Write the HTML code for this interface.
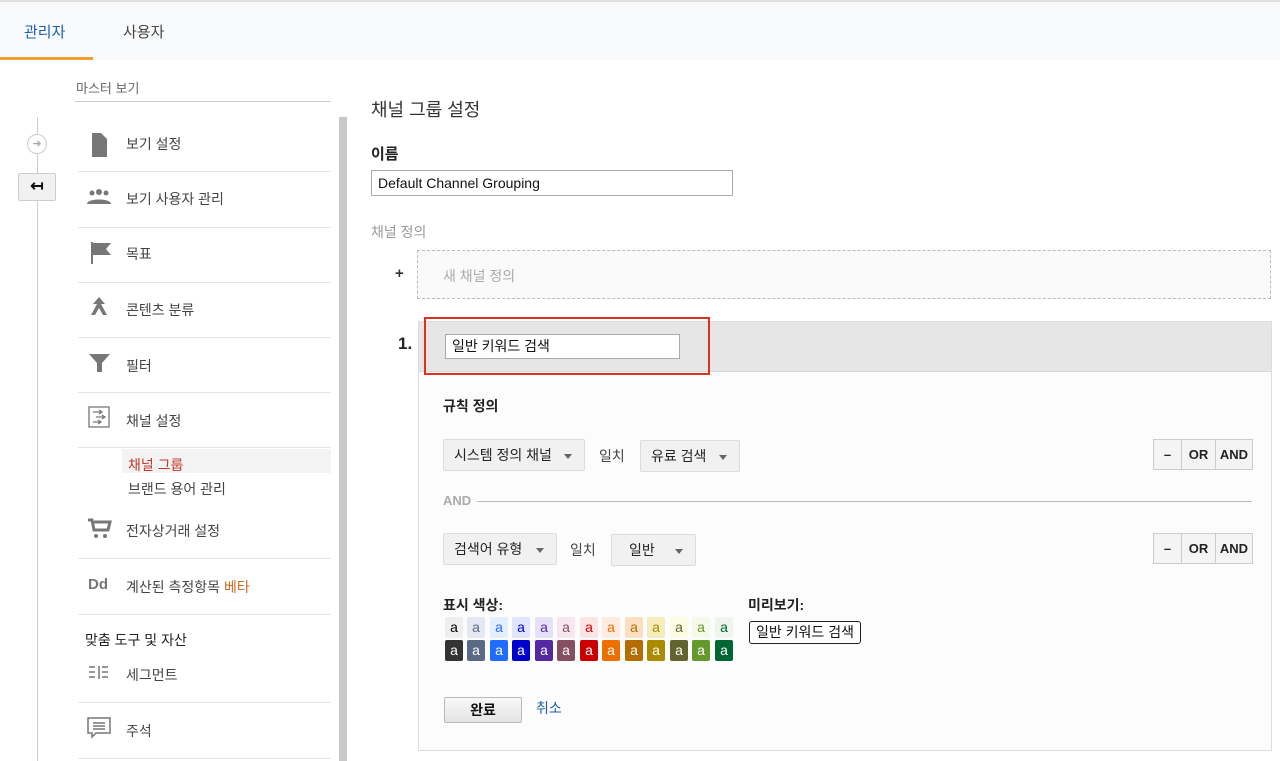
<!DOCTYPE html>
<html><head><meta charset="utf-8"><style>
*{margin:0;padding:0;box-sizing:border-box}
body{width:1280px;height:761px;overflow:hidden;background:#fff;font-family:"Liberation Sans","Noto Sans CJK KR",sans-serif;color:#333;position:relative}
.a{position:absolute;white-space:nowrap}
.t{font-size:14px;color:#444}
.sep{position:absolute;left:78px;width:253px;height:1px;background:#e4e4e4}
.dd{position:absolute;height:32px;background:#f1f1f1;border:1px solid #dcdcdc;border-radius:2px;font-size:14px;color:#222;padding:0 0 0 10px;line-height:30px}
.dd:after{content:"";position:absolute;right:12px;top:14px;border:4px solid transparent;border-top:5px solid #666}
.btns{position:absolute;height:31px;display:flex;border:1px solid #ccc;background:#f4f4f4;font-size:13px;font-weight:bold;color:#222}
.btns div{border-left:1px solid #ccc;text-align:center;line-height:29px}
.btns div:first-child{border-left:none}
.sw{position:absolute;width:18px;height:21px;font-size:14px;text-align:center;line-height:20px;border-radius:2px}
</style></head><body>
<div class="a" style="left:0;top:0;width:1280px;height:60px;background:#f8f9fa;border-top:2px solid #e0e0e0"></div>
<div class="a" style="left:24px;top:21px;font-size:15px;color:#1a5ea8">관리자</div>
<div class="a" style="left:123px;top:21px;font-size:15px;color:#444">사용자</div>
<div class="a" style="left:0;top:57px;width:93px;height:3px;background:#f0a030"></div>

<div class="a" style="left:76px;top:78px;font-size:13px;color:#666">마스터 보기</div>
<div class="a" style="left:75px;top:101px;width:256px;height:1px;background:#ccc"></div>
<div class="a" style="left:37px;top:117px;width:1px;height:644px;background:#ccc"></div>
<div class="a" style="left:27px;top:134px;width:20px;height:20px;border-radius:50%;border:1px solid #ccc;background:#fff;color:#aaa;font-size:11px;text-align:center;line-height:18px">➜</div>
<div class="a" style="left:18px;top:173px;width:38px;height:28px;border:1px solid #ccc;background:#f1f1f1;border-radius:2px;font-size:16px;font-weight:bold;text-align:center;line-height:26px;color:#111">↤</div>
<div class="a" style="left:339px;top:117px;width:8px;height:644px;background:#c8c8c8"></div>

<svg class="a" style="left:84px;top:128px" width="30" height="620" viewBox="0 0 30 620" fill="#777">
<path d="M8 5h9l6 6v18H8z"/>
<g transform="translate(0,55)"><circle cx="8" cy="10" r="2.5"/><circle cx="15" cy="9" r="3"/><circle cx="22" cy="10" r="2.5"/><path d="M3 21c0-6 24-6 24 0z"/></g>
<g transform="translate(0,110)"><path d="M7 4h2v22H7zM9 5h18l-5 6 5 6H9z"/></g>
<g transform="translate(0,165)"><path d="M15 4l-6 7h4l-6 11h4l4-7 4 7h4l-6-11h4z"/></g>
<g transform="translate(0,220)"><path d="M5 6h21l-8 9v9h-5v-9z"/></g>
<g transform="translate(0,275)" fill="none" stroke="#777" stroke-width="1.3"><rect x="5" y="4" width="20" height="20"/><path d="M9 9h9M15 7l3 2-3 2M12 14h9M18 12l3 2-3 2M9 19h8M14 17l3 2-3 2"/></g>
<g transform="translate(0,385)"><path d="M4 7h4l2 10h14l2-8H10" fill="none" stroke="#777" stroke-width="3"/><circle cx="12" cy="23" r="2"/><circle cx="21" cy="23" r="2"/></g>
<g transform="translate(0,530)" stroke="#777" stroke-width="1.5"><path d="M5 9h6M5 14h6M5 19h6M15 8v13M18 9h6M18 14h6M18 19h6"/></g>
<g transform="translate(0,585)" fill="none" stroke="#777" stroke-width="1.5"><path d="M4 5h22v15H12l-4 4v-4H4z"/><path d="M9 10h12M9 13h12M9 16h12"/></g>
</svg>
<div class="a" style="left:88px;top:576px;font-size:15px;font-weight:bold;color:#777">Dd</div>

<div class="a t" style="left:126px;top:134px">보기 설정</div>
<div class="sep" style="top:171px"></div>
<div class="a t" style="left:126px;top:189px">보기 사용자 관리</div>
<div class="sep" style="top:227px"></div>
<div class="a t" style="left:126px;top:244px">목표</div>
<div class="sep" style="top:282px"></div>
<div class="a t" style="left:126px;top:300px">콘텐츠 분류</div>
<div class="sep" style="top:337px"></div>
<div class="a t" style="left:126px;top:356px">필터</div>
<div class="sep" style="top:392px"></div>
<div class="a t" style="left:126px;top:411px">채널 설정</div>
<div class="sep" style="top:447px"></div>
<div class="a" style="left:122px;top:449px;width:209px;height:24px;background:#f3f3f3"></div>
<div class="a" style="left:128px;top:455px;font-size:14px;color:#c0392b">채널 그룹</div>
<div class="a t" style="left:128px;top:479px">브랜드 용어 관리</div>
<div class="a t" style="left:126px;top:521px">전자상거래 설정</div>
<div class="sep" style="top:558px"></div>
<div class="a t" style="left:126px;top:577px">계산된 측정항목 <span style="color:#d2691e">베타</span></div>
<div class="sep" style="top:614px"></div>
<div class="a" style="left:85px;top:630px;font-size:14px;color:#222">맞춤 도구 및 자산</div>
<div class="a t" style="left:126px;top:665px">세그먼트</div>
<div class="sep" style="top:702px"></div>
<div class="a t" style="left:126px;top:721px">주석</div>
<div class="sep" style="top:758px"></div>

<div class="a" style="left:371px;top:96px;font-size:18px;color:#333">채널 그룹 설정</div>
<div class="a" style="left:371px;top:143px;font-size:15px;font-weight:bold;color:#222">이름</div>
<div class="a" style="left:371px;top:170px;width:362px;height:26px;border:1px solid #aaa;font-size:14px;line-height:24px;padding-left:6px;color:#111">Default Channel Grouping</div>
<div class="a" style="left:371px;top:222px;font-size:14px;color:#999">채널 정의</div>
<div class="a" style="left:395px;top:265px;font-size:15px;font-weight:bold;color:#333">+</div>
<div class="a" style="left:417px;top:250px;width:854px;height:49px;border:1px dashed #bbb;background:#fafafa"></div>
<div class="a" style="left:443px;top:266px;font-size:14px;color:#aaa">새 채널 정의</div>

<div class="a" style="left:398px;top:334px;font-size:17px;font-weight:bold;color:#222">1.</div>
<div class="a" style="left:418px;top:321px;width:854px;height:430px;border:1px solid #ddd;background:#fcfcfc"></div>
<div class="a" style="left:419px;top:322px;width:852px;height:50px;background:#e6e6e6;border-bottom:1px solid #d8d8d8"></div>
<div class="a" style="left:424px;top:317px;width:286px;height:58px;border:2px solid #e03020"></div>
<div class="a" style="left:445px;top:334px;width:235px;height:25px;border:1px solid #aaa;background:#fff;font-size:14px;line-height:23px;padding-left:6px;color:#111">일반 키워드 검색</div>

<div class="a" style="left:443px;top:396px;font-size:14px;font-weight:bold;color:#222">규칙 정의</div>
<div class="dd" style="left:443px;top:439px;width:142px">시스템 정의 채널</div>
<div class="a t" style="left:599px;top:446px">일치</div>
<div class="dd" style="left:640px;top:440px;width:100px">유료 검색</div>
<div class="btns" style="left:1153px;top:439px;width:100px"><div style="width:27px">–</div><div style="width:34px">OR</div><div style="flex:1">AND</div></div>

<div class="a" style="left:443px;top:493px;font-size:13px;font-weight:bold;color:#aaa">AND</div>
<div class="a" style="left:477px;top:501px;width:775px;height:1px;background:#bbb"></div>

<div class="dd" style="left:443px;top:533px;width:114px">검색어 유형</div>
<div class="a t" style="left:570px;top:540px">일치</div>
<div class="dd" style="left:611px;top:534px;width:85px;padding-left:17px">일반</div>
<div class="btns" style="left:1153px;top:533px;width:100px"><div style="width:27px">–</div><div style="width:34px">OR</div><div style="flex:1">AND</div></div>

<div class="a" style="left:443px;top:595px;font-size:14px;font-weight:bold;color:#222">표시 색상:</div>
<div class="a" style="left:748px;top:595px;font-size:14px;font-weight:bold;color:#222">미리보기:</div>
<div class="a" style="left:749px;top:621px;width:112px;height:23px;border:1.5px solid #222;border-radius:3px;font-size:14px;line-height:20px;text-align:center;color:#111;background:#fff">일반 키워드 검색</div>
<div id="sw"></div>

<div class="a" style="left:444px;top:697px;width:78px;height:26px;border:1px solid #bbb;border-radius:2px;background:linear-gradient(#f8f8f8,#e4e4e4);font-size:14px;font-weight:bold;text-align:center;line-height:24px;color:#111">완료</div>
<div class="a" style="left:536px;top:698px;font-size:14px;color:#1a5ea8">취소</div>

<div class="sw" style="left:445px;top:617px;background:#eeeeee;color:#000">a</div><div class="sw" style="left:467px;top:617px;background:#e3e8f2;color:#5a6986">a</div><div class="sw" style="left:490px;top:617px;background:#e3efff;color:#206cff">a</div><div class="sw" style="left:512px;top:617px;background:#e0e4ff;color:#0000cc">a</div><div class="sw" style="left:535px;top:617px;background:#e6e0f8;color:#5229a3">a</div><div class="sw" style="left:557px;top:617px;background:#f8e6ef;color:#854f61">a</div><div class="sw" style="left:580px;top:617px;background:#fce4e4;color:#cc0000">a</div><div class="sw" style="left:602px;top:617px;background:#fdebe0;color:#ec7000">a</div><div class="sw" style="left:625px;top:617px;background:#fae0c0;color:#b36d00">a</div><div class="sw" style="left:647px;top:617px;background:#f5ecbc;color:#ab8b00">a</div><div class="sw" style="left:670px;top:617px;background:#fcfde0;color:#636330">a</div><div class="sw" style="left:692px;top:617px;background:#f5f9e8;color:#64992c">a</div><div class="sw" style="left:715px;top:617px;background:#eef5ec;color:#006633">a</div>
<div class="sw" style="left:445px;top:640px;background:#333;color:#fff">a</div><div class="sw" style="left:467px;top:640px;background:#5a6986;color:#fff">a</div><div class="sw" style="left:490px;top:640px;background:#206cff;color:#fff">a</div><div class="sw" style="left:512px;top:640px;background:#0000cc;color:#fff">a</div><div class="sw" style="left:535px;top:640px;background:#5229a3;color:#fff">a</div><div class="sw" style="left:557px;top:640px;background:#854f61;color:#fff">a</div><div class="sw" style="left:580px;top:640px;background:#cc0000;color:#fff">a</div><div class="sw" style="left:602px;top:640px;background:#ec7000;color:#fff">a</div><div class="sw" style="left:625px;top:640px;background:#b36d00;color:#fff">a</div><div class="sw" style="left:647px;top:640px;background:#ab8b00;color:#fff">a</div><div class="sw" style="left:670px;top:640px;background:#636330;color:#fff">a</div><div class="sw" style="left:692px;top:640px;background:#64992c;color:#fff">a</div><div class="sw" style="left:715px;top:640px;background:#006633;color:#fff">a</div>
</body></html>
